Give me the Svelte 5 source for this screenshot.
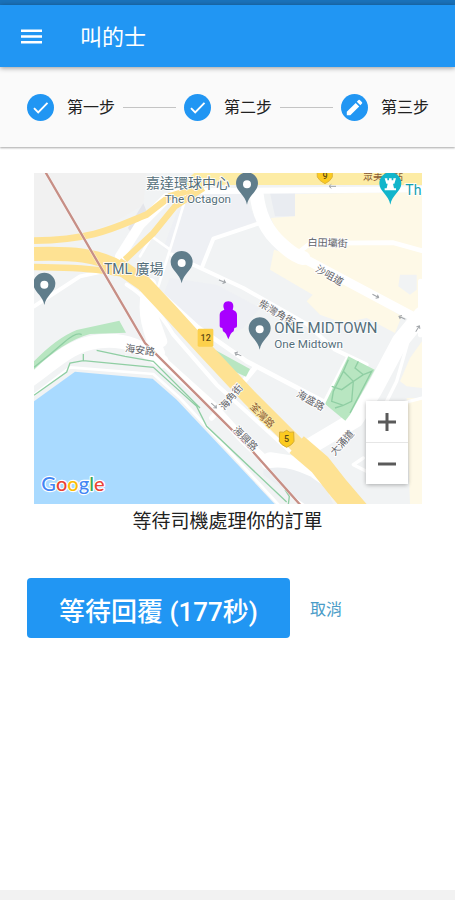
<script>
  let seconds = $state(177);
  let zoom = $state(1);

  const steps = [
    { label: '第一步', done: true },
    { label: '第二步', done: true },
    { label: '第三步', done: false }
  ];

  const pins = [
    { x: 651, y: 110 },
    { x: 455, y: 346 },
    { x: 43, y: 411 },
    { x: 689, y: 545 }
  ];

  const arrows = [
    { x: 907, y: 55, a: 180 },
    { x: 577, y: 340, a: 22 },
    { x: 1037, y: 384, a: 28 },
    { x: 1116, y: 449, a: 205 },
    { x: 1163, y: 482, a: -58 },
    { x: 624, y: 559, a: 205 },
    { x: 552, y: 713, a: 42 }
  ];

  const streets = [
    { x: 893, y: 224, a: 2, text: '白田壩街' },
    { x: 899, y: 322, a: 30, text: '沙咀道' },
    { x: 741, y: 434, a: 31, text: '柴灣角街' },
    { x: 330, y: 546, a: 8, text: '海安路' },
    { x: 842, y: 697, a: 30, text: '海盛路' },
    { x: 603, y: 687, a: -50, text: '海角街' },
    { x: 647, y: 811, a: 45, text: '海興路' },
    { x: 936, y: 824, a: -48, text: '大涌道' }
  ];
</script>

<div class="page">
  <div class="status"></div>
  <header class="bar">
    <button class="menu" aria-label="選單">
      <svg viewBox="0 0 21 15" width="21" height="15"><path d="M0 1.800H21M0 7.500H21M0 13.200H21" stroke="#fff" stroke-width="2.500" /></svg>
    </button>
    <h1>叫的士</h1>
  </header>

  <ol class="stepper">
    {#each steps as step, i}
      {#if i > 0}<li class="line" aria-hidden="true"></li>{/if}
      <li class="step">
        <svg viewBox="0 0 27 27" width="27" height="27" aria-hidden="true">
          <circle cx="13.5" cy="13.5" r="13.5" fill="#2196f3" />
          {#if step.done}
            <path d="M7 14.2l4.2 4.3L20.500 8.800" fill="none" stroke="#fff" stroke-width="1.900" />
          {:else}
            <path d="M5.800 17.800V21.300H9.300L18.200 12.400 14.700 8.900ZM15.800 7.800L19.300 11.300 21 9.600Q21.600 9 21 8.300L18.800 6.100Q18.100 5.500 17.500 6.100Z" fill="#fff" />
          {/if}
        </svg>
        <span>{step.label}</span>
      </li>
    {/each}
  </ol>

  <main>
    <div class="map">
      <svg class="canvas" viewBox="12 15 1164 994" preserveAspectRatio="xMidYMid slice" role="img" aria-label="地圖">
        <rect x="12" y="15" width="1164" height="994" fill="#f1f3f4" />
        <path d="M12 15H350L340 110 250 165 130 208 12 212Z" fill="#f1f1f1" />
        <path d="M340 106L352 135 312 208 294 180Z" fill="#e4e5ea" />
        <path d="M460 80L640 75 680 160 550 212 515 300 400 240ZM420 330L560 350 690 420 640 480 560 520 400 380Z" fill="#eceff3" opacity=".6" />
        <path d="M720 75H795V145H735Z" fill="#e9ecf1" />

        <!-- commercial districts -->
        <g fill="#fef9e7">
          <path d="M795 78L1176 72V410L1140 440 960 345 820 262 740 190 722 150 795 145Z" />
          <path d="M732 245L800 265 960 350 1115 445 1095 495 1010 450 940 465 870 440 830 400 848 380 720 305Z" />
          <path d="M1176 520L1140 570 1110 640 1130 655 1176 660ZM1130 690H1176V1009H1140Z" />
        </g>
        <path d="M1110 320H1160V365L1140 380 1105 355Z" fill="#f1f3f4" />

        <!-- water and shore -->
        <path d="M12 700L135 611 368 632 440 695 735 1009H12Z" fill="#a9daff" />
        <g fill="none" stroke="#fff" stroke-linecap="round" stroke-linejoin="round">
          <path d="M0 636C80 580 120 530 210 520S350 550 395 580" stroke-width="42" />
          <path d="M0 690L120 598 370 618 450 690 745 1009" stroke-width="8" />
          <path d="M12 415L150 325 220 310" stroke-width="12" />
          <path d="M360 350C340 410 345 460 385 555" stroke-width="40" />
          <path d="M290 350Q370 400 430 500L560 650 780 850" stroke-width="12" />
          <path d="M400 580L545 710 640 815 720 890 830 1009" stroke-width="26" />
          <path d="M345 380L395 520 340 540" stroke-width="34" />
          <path d="M270 265L330 170 410 90" stroke-width="30" />
          <path d="M470 80L420 245 365 205 330 265M420 245L385 355" stroke-width="8" />
          <path d="M515 300L550 212 690 165" stroke-width="12" />
          <path d="M430 70L1176 64" stroke-width="18" />
          <path d="M680 80Q690 165 740 215T820 270" stroke-width="42" />
          <path d="M800 260L960 345 1176 460" stroke-width="28" />
          <path d="M800 258L840 226 1090 224 1176 248" stroke-width="14" />
          <path d="M425 260L640 360 830 468 915 545 1010 590" stroke-width="12" />
          <path d="M330 320L500 475 650 580 960 742" stroke-width="14" />
          <path d="M675 600L600 690 545 750" stroke-width="16" />
          <path d="M955 565L885 700" stroke-width="12" />
          <path d="M1176 440L1110 520 1030 670 975 755 840 835" stroke-width="50" />
          <path d="M1140 500L1100 640 1060 720 1176 690M1000 870L970 890 1050 930" stroke-width="10" />
          <path d="M1172 340V500" stroke-width="16" />
          <path d="M720 880L850 900 890 960" stroke-width="55" />
        </g>
        <path d="M700 905Q760 885 840 925L890 960 910 1009H825L700 920Z" fill="#eceff2" />

        <!-- parks -->
        <g fill="#b8e6c1">
          <path d="M12 580Q80 510 140 486L268 458 288 494 180 498Q100 520 12 605Z" />
          <path d="M545 540L660 603 648 626 590 600Z" />
          <path d="M955 565L1034 605 960 740 946 758 885 708Z" />
        </g>
        <g fill="none" stroke="#8fcea3" stroke-width="4">
          <path d="M12 598Q60 560 100 525T155 500M12 682L110 612 120 585 160 578 370 598 500 715 530 775 770 1002M160 578V558M200 547L285 565 370 580 510 720M765 965L778 985 775 1009" />
          <path d="M955 575L940 610 970 640 935 665 905 655M940 610L910 670 905 700 940 712 965 700 970 640 1000 620 975 600 985 580M1000 620L1025 610 960 735M940 712L915 720" />
        </g>

        <!-- highways -->
        <g fill="none" stroke="#fee293">
          <path d="M530 15L480 60" stroke-width="50" stroke="#fdeca5" />
          <path d="M510 32H1176" stroke-width="38" stroke="#fdeca5" />
          <path d="M12 218C200 215 260 175 350 140L420 85 500 60" stroke-width="20" />
          <path d="M285 275L370 195 435 115 520 60" stroke-width="19" />
          <path d="M12 258C130 255 200 260 270 300" stroke-width="42" />
          <path d="M12 297Q140 298 220 308T330 330" stroke-width="20" />
          <path d="M260 290L340 345 420 430 520 540 660 690 820 850" stroke-width="47" />
          <path d="M800 830L870 890 925 960 985 1030" stroke-width="66" />
        </g>

        <!-- railway -->
        <path d="M45 10L225 320 345 525 500 680 650 830 812 1012" fill="none" stroke="#fff" stroke-width="10" opacity=".6" />
        <path d="M45 10L225 320 345 525 500 680 650 830 812 1012" fill="none" stroke="#c78f86" stroke-width="7" />

        <g fill="none" stroke="#a1a5a9" stroke-width="3">
          {#each arrows as p}
            <path d="M-11 0H10M3 -6L10 0 3 6" transform="translate({p.x} {p.y}) rotate({p.a})" />
          {/each}
        </g>

        {#each streets as s}
          <text class="street" transform="translate({s.x} {s.y}) rotate({s.a})" dy="11">{s.text}</text>
        {/each}
        <text class="street road" transform="translate(697 742) rotate(45)" dy="11">荃灣路</text>
        <text class="street road" x="1059" y="37">眾美車站</text>

        <rect x="503" y="482" width="47" height="54" rx="4" fill="#fcd04b" />
        <text class="badge" x="527" y="520">12</text>
        <path d="M749 792Q762 796 770 787 778 796 791 792L792 820Q788 830 770 838 752 830 748 820Z" fill="#fccb20" stroke="#d5ac31" stroke-width="3" />
        <text class="badge" x="770" y="821">5</text>
        <path d="M861 0H907V27Q903 38 885 47 867 38 862 27Z" fill="#fccb20" stroke="#e0b63a" stroke-width="3" />
        <text class="badge" x="885" y="34">9</text>

        <text class="place" x="474" y="61" text-anchor="middle">嘉達環球中心</text>
        <text class="sub" x="603" y="105" text-anchor="end">The Octagon</text>
        <text class="place" x="222" y="317">TML 廣場</text>
        <text class="place wide" x="733" y="496">ONE MIDTOWN</text>
        <text class="sub" x="733" y="539">One Midtown</text>
        <text class="place teal" x="1126" y="82">Th</text>

        {#each pins as p}
          <g transform="translate({p.x} {p.y})">
            <path d="M0 0C-5 -30 -33 -39 -33 -64A33 33 0 0 1 33 -64C33 -39 5 -30 0 0Z" fill="#607d8b" />
            <circle cy="-61" r="12" fill="#fff" />
          </g>
        {/each}
        <g transform="translate(1081 110)">
          <path d="M0 0C-5 -30 -33 -39 -33 -64A33 33 0 0 1 33 -64C33 -39 5 -30 0 0Z" fill="#12b5cb" />
          <path d="M-17 -79H-9V-73H-4V-79H4V-73H9V-79H17L12 -63H8L11 -49H17V-43H-17V-49H-11L-8 -63H-12Z" fill="#fff" />
        </g>
        <path d="M583 425C576 410 583 400 595 400S614 410 608 425Q621 430 621 440V475Q621 480 613 480L611 490Q605 494 602 498L595 514 588 498Q585 494 579 490L577 480Q569 480 569 475V440Q569 430 583 425Z" fill="#a800ff" />

        <text class="logo" x="34" y="968"><tspan fill="#4285f4">G</tspan><tspan fill="#ea4335">o</tspan><tspan fill="#fbbc05">o</tspan><tspan fill="#4285f4">g</tspan><tspan fill="#34a853">l</tspan><tspan fill="#ea4335">e</tspan></text>
      </svg>

      <div class="zoom">
        <button aria-label="放大" onclick={() => (zoom += 1)}>
          <svg viewBox="0 0 18 18" width="18" height="18"><path d="M0 9H18M9 0V18" stroke="#5a5a5a" stroke-width="3" /></svg>
        </button>
        <button aria-label="縮小" onclick={() => (zoom -= 1)}>
          <svg viewBox="0 0 18 18" width="18" height="18"><path d="M0 9H18" stroke="#5a5a5a" stroke-width="3" /></svg>
        </button>
      </div>
    </div>

    <p class="caption">等待司機處理你的訂單</p>

    <div class="actions">
      <button class="primary">等待回覆 ({seconds}秒)</button>
      <button class="cancel">取消</button>
    </div>
  </main>
  <footer></footer>
</div>

<style>
  :global(body) {
    background: #fff;
  }
  .page {
    display: flex;
    flex-direction: column;
    min-height: 100vh;
    font-family: Roboto, 'Noto Sans CJK TC', sans-serif;
    color: #212121;
  }
  button {
    border: 0;
    padding: 0;
    background: none;
    font-family: inherit;
    cursor: pointer;
  }
  .status {
    height: 5px;
    background: #1a72ba;
  }
  .bar {
    display: flex;
    align-items: center;
    gap: 38px;
    height: 62px;
    padding: 0 21px;
    background: #2196f3;
    box-shadow: 0 1px 5px rgba(0, 0, 0, 0.4);
    z-index: 1;
  }
  .menu {
    display: flex;
  }
  h1 {
    margin: 0;
    padding-top: 4px;
    font-size: 22px;
    font-weight: 400;
    line-height: 32px;
    color: #fff;
  }
  .stepper {
    display: flex;
    align-items: center;
    height: 80px;
    margin: 0;
    padding: 0 26px 0 27px;
    list-style: none;
    background: #fafafa;
    box-shadow: 0 1px 2px rgba(0, 0, 0, 0.35);
  }
  .step {
    display: flex;
    align-items: center;
    gap: 13px;
    font-size: 16px;
    line-height: 24px;
    white-space: nowrap;
  }
  .step span {
    padding-top: 2px;
  }
  .line {
    flex: 1;
    height: 1px;
    margin: 0 8px;
    background: #c4c4c4;
  }
  main {
    flex: 1;
    padding: 26px 27px 0;
  }
  .map {
    position: relative;
    margin: 0 6px 0 7px;
  }
  .canvas {
    display: block;
    width: 100%;
    max-height: 80vh;
  }
  .street {
    font-size: 30px;
    text-anchor: middle;
    fill: #5f6368;
    stroke: #fff;
    stroke-width: 5px;
    paint-order: stroke;
  }
  .road {
    fill: #8a5a35;
    stroke: #fdeca5;
  }
  .badge {
    font-size: 27px;
    font-weight: 500;
    text-anchor: middle;
    fill: #614c14;
  }
  .place {
    font-size: 42px;
    fill: #546e7a;
    stroke: #fff;
    stroke-width: 5px;
    paint-order: stroke;
  }
  .wide {
    font-size: 45px;
  }
  .sub {
    font-size: 35px;
    fill: #546e7a;
    stroke: #fff;
    stroke-width: 5px;
    paint-order: stroke;
  }
  .teal {
    fill: #129eaf;
  }
  .logo {
    font-family: Lato, sans-serif;
    font-size: 60px;
    font-weight: 500;
    stroke: #fff;
    stroke-width: 7px;
    stroke-linejoin: round;
    paint-order: stroke;
  }
  .zoom {
    position: absolute;
    right: 14px;
    bottom: 20px;
    display: flex;
    flex-direction: column;
    gap: 1px;
    width: 42px;
    background: #e6e6e6;
    border-radius: 2px;
    box-shadow: 0 1px 4px rgba(0, 0, 0, 0.3);
  }
  .zoom button {
    display: flex;
    align-items: center;
    justify-content: center;
    height: 41px;
    background: #fff;
  }
  .caption {
    margin: 4px 0 0;
    font-size: 19px;
    line-height: 28px;
    text-align: center;
  }
  .actions {
    display: flex;
    align-items: center;
    gap: 20px;
    margin-top: 42px;
  }
  .primary {
    height: 60px;
    padding: 2px 32px 0;
    border-radius: 4px;
    background: #2196f3;
    color: #fff;
    font-size: 26px;
    font-weight: 500;
    white-space: nowrap;
  }
  .cancel {
    font-size: 16px;
    color: #4a9cc8;
  }
  footer {
    height: 10px;
    background: #f2f2f2;
  }
</style>
